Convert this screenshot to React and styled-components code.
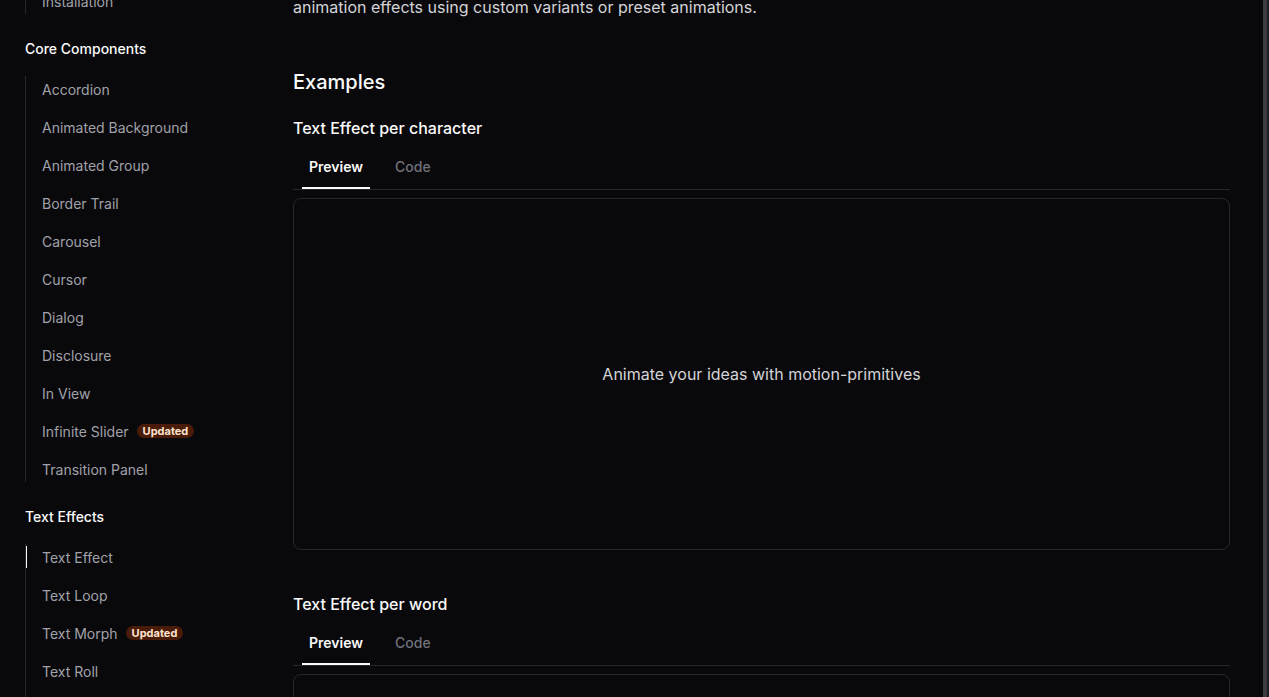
import React, { useLayoutEffect, useRef } from "react";
import styled, { createGlobalStyle } from "styled-components";

const GlobalStyle = createGlobalStyle`
  html, body {
    margin: 0;
    padding: 0;
    background: #09090b;
    font-family: Inter, "Noto Sans", sans-serif;
    -webkit-font-smoothing: antialiased;
  }
  * { box-sizing: border-box; }
`;

const nav = [
  { title: "Getting Started", items: [{ name: "Introduction" }, { name: "Installation" }] },
  {
    title: "Core Components",
    items: [
      { name: "Accordion" },
      { name: "Animated Background" },
      { name: "Animated Group" },
      { name: "Border Trail" },
      { name: "Carousel" },
      { name: "Cursor" },
      { name: "Dialog" },
      { name: "Disclosure" },
      { name: "In View" },
      { name: "Infinite Slider", badge: "Updated" },
      { name: "Transition Panel" },
    ],
  },
  {
    title: "Text Effects",
    items: [
      { name: "Text Effect", active: true },
      { name: "Text Loop" },
      { name: "Text Morph", badge: "Updated" },
      { name: "Text Roll" },
      { name: "Text Scramble" },
      { name: "Text Shimmer" },
    ],
  },
];

const examples = [
  { title: "Text Effect per character", demo: "Animate your ideas with motion-primitives" },
  { title: "Text Effect per word", demo: "Animate your ideas with motion-primitives" },
];

const SCROLL = 120;

const Frame = styled.div`
  display: flex;
  height: 100vh;
  background: #09090b;
`;

const Scroller = styled.div`
  flex: 1;
  overflow: hidden;
`;

const Layout = styled.div`
  display: flex;
  align-items: flex-start;
  padding-bottom: 200px;
`;

const ScrollTrack = styled.div`
  width: 6px;
  display: flex;
  background: #1b1d28;
`;

const ScrollThumb = styled.div`
  width: 4px;
  background: #3b3b40;
`;

const Sidebar = styled.nav`
  width: 293px;
  flex-shrink: 0;
  padding: 33px 0 0 25px;
  display: flex;
  flex-direction: column;
  gap: 25px;
`;

const Section = styled.div`
  display: flex;
  flex-direction: column;
  gap: 17px;
`;

const SectionTitle = styled.div`
  color: #fafafa;
  font-size: 14px;
  line-height: 20px;
  font-weight: 500;
`;

const NavList = styled.ul`
  list-style: none;
  margin: 0;
  padding: 0;
  border-left: 1px solid #27272a;
  display: flex;
  flex-direction: column;
  gap: 12px;
`;

const NavItem = styled.li`
  position: relative;
  height: 26px;
  padding-left: 16px;
  display: flex;
  align-items: center;
  gap: 8px;
  font-size: 14px;
  color: #a1a1aa;

  &::before {
    content: "";
    display: ${(p) => (p.$active ? "block" : "none")};
    position: absolute;
    left: 0;
    top: 2px;
    width: 1px;
    height: 22px;
    background: #fafafa;
  }
`;

const Badge = styled.span`
  height: 14px;
  padding: 0 6px;
  border-radius: 999px;
  background: #4a1c08;
  color: #fde3cf;
  font-size: 11px;
  font-weight: 700;
  line-height: 14px;
`;

const Main = styled.main`
  width: 937px;
  flex-shrink: 0;
  padding-top: 39px;
  display: flex;
  flex-direction: column;
`;

const Title = styled.h1`
  margin: 0;
  color: #fafafa;
  font-size: 30px;
  line-height: 36px;
  font-weight: 600;
`;

const Description = styled.p`
  margin: 16px 0 0;
  color: #d4d4d8;
  font-size: 16px;
  line-height: 24px;
`;

const Heading = styled.h2`
  margin: 49px 0 0;
  color: #fafafa;
  font-size: 20px;
  line-height: 28px;
  font-weight: 500;
`;

const Example = styled.section`
  margin-top: ${(p) => (p.$first ? "20px" : "42px")};
  display: flex;
  flex-direction: column;
`;

const ExampleTitle = styled.h3`
  margin: 0;
  color: #fafafa;
  font-size: 16px;
  line-height: 24px;
  font-weight: 500;
`;

const TabList = styled.div`
  margin-top: 9px;
  padding-left: 9px;
  display: flex;
  gap: 18px;
  border-bottom: 1px solid #27272a;
`;

const Tab = styled.button`
  background: none;
  border: none;
  margin: 0;
  padding: 8px 7px 10px;
  font-family: inherit;
  font-size: 14px;
  line-height: 20px;
  font-weight: ${(p) => (p.$active ? 600 : 500)};
  color: ${(p) => (p.$active ? "#fafafa" : "#71717a")};
  border-bottom: 2px solid ${(p) => (p.$active ? "#fafafa" : "transparent")};
`;

const PreviewBox = styled.div`
  margin-top: 8px;
  height: 352px;
  border: 1px solid #27272a;
  border-radius: 8px;
  display: flex;
  align-items: center;
  justify-content: center;
  color: #d4d4d8;
  font-size: 16px;
`;

export default function App() {
  const scrollRef = useRef(null);

  useLayoutEffect(() => {
    if (scrollRef.current) scrollRef.current.scrollTop = SCROLL;
  }, []);

  return (
    <>
      <GlobalStyle />
      <Frame>
        <Scroller ref={scrollRef}>
          <Layout>
            <Sidebar>
              {nav.map((section) => (
                <Section key={section.title}>
                  <SectionTitle>{section.title}</SectionTitle>
                  <NavList>
                    {section.items.map((item) => (
                      <NavItem key={item.name} $active={item.active}>
                        {item.name}
                        {item.badge && <Badge>{item.badge}</Badge>}
                      </NavItem>
                    ))}
                  </NavList>
                </Section>
              ))}
            </Sidebar>
            <Main>
              <Title>Text Effect</Title>
              <Description>
                The TextEffect component animates text per character, word or line, letting you build flexible
                <br />
                animation effects using custom variants or preset animations.
              </Description>
              <Heading>Examples</Heading>
              {examples.map((ex, i) => (
                <Example key={ex.title} $first={i === 0}>
                  <ExampleTitle>{ex.title}</ExampleTitle>
                  <TabList>
                    <Tab $active>Preview</Tab>
                    <Tab>Code</Tab>
                  </TabList>
                  <PreviewBox>{ex.demo}</PreviewBox>
                </Example>
              ))}
            </Main>
          </Layout>
        </Scroller>
        <ScrollTrack>
          <ScrollThumb />
        </ScrollTrack>
      </Frame>
    </>
  );
}
